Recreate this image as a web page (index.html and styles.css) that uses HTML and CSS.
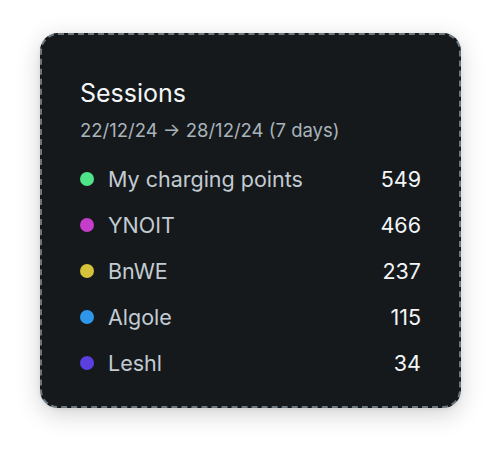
FILE: index.html
```html
<!DOCTYPE html>
<html>
<head>
<meta charset="utf-8">
<link rel="stylesheet" href="styles.css">
</head>
<body>
<div class="page">
  <div class="card">
    <h1 class="title">Sessions</h1>
    <div class="range">22/12/24 → 28/12/24 (7 days)</div>
    <ul class="list">
      <li class="row"><span class="dot dot-green"></span><span class="label">My charging points</span><span class="value">549</span></li>
      <li class="row"><span class="dot dot-magenta"></span><span class="label">YNOIT</span><span class="value">466</span></li>
      <li class="row"><span class="dot dot-yellow"></span><span class="label">BnWE</span><span class="value">237</span></li>
      <li class="row"><span class="dot dot-blue"></span><span class="label">Algole</span><span class="value">115</span></li>
      <li class="row"><span class="dot dot-purple"></span><span class="label">Leshl</span><span class="value">34</span></li>
    </ul>
  </div>
</div>
</body>
</html>
```
FILE: styles.css
```css
* { box-sizing: border-box; }
html, body { margin: 0; padding: 0; background: #ffffff; }
body { font-family: Inter, "Noto Sans", sans-serif; }
.page {
  width: 500px;
  height: 451px;
  padding: 33px 39px 43px 40px;
}
.card {
  width: 421px;
  height: 375px;
  background: #15191c;
  border: 2px dashed #6b767e;
  border-radius: 18px;
  box-shadow: 0 6px 24px rgba(0,0,0,0.18), 0 1px 4px rgba(0,0,0,0.08);
  padding: 43px 38px 0 38px;
}
.title {
  margin: 0;
  font-size: 25px;
  font-weight: 400;
  line-height: 30px;
  color: #f3f5f7;
}
.range {
  margin-top: 10px;
  font-size: 18.5px;
  line-height: 24px;
  color: #a9b3bb;
}
.list {
  list-style: none;
  margin: 24px 0 0 0;
  padding: 0;
  display: flex;
  flex-direction: column;
  gap: 20px;
}
.row {
  display: flex;
  align-items: center;
  height: 26px;
  font-size: 21.5px;
}
.dot {
  width: 14px;
  height: 14px;
  border-radius: 50%;
  margin-right: 14px;
  flex: none;
}
.dot-green { background: #4fe38a; }
.dot-magenta { background: #c53dc9; }
.dot-yellow { background: #d6c23a; }
.dot-blue { background: #2f97ea; }
.dot-purple { background: #5b3fe0; }
.label { color: #c3cbd2; flex: 1; }
.value { color: #f3f5f7; }
```
